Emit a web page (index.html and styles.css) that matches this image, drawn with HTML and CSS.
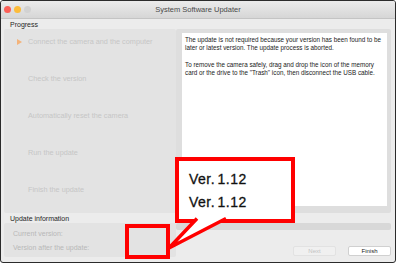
FILE: index.html
```html
<!DOCTYPE html>
<html>
<head>
<meta charset="utf-8">
<link rel="stylesheet" href="styles.css">
</head>
<body>
<div class="window">
  <div class="titlebar">
    <div class="lights">
      <span class="light red"></span>
      <span class="light yellow"></span>
      <span class="light gray"></span>
    </div>
    <div class="title">System Software Updater</div>
  </div>
  <div class="content">
    <div class="section-label">Progress</div>
    <div class="columns">
      <div class="col-left">
        <div class="steps">
          <div class="step active"><span class="arrow"></span>Connect the camera and the computer</div>
          <div class="step">Check the version</div>
          <div class="step">Automatically reset the camera</div>
          <div class="step">Run the update</div>
          <div class="step">Finish the update</div>
        </div>
        <div class="section-label info-label">Update information</div>
        <div class="info">
          <div>Current version:</div>
          <div>Version after the update:</div>
        </div>
      </div>
      <div class="col-right">
        <div class="msg-panel">
          <div class="msg">The update is not required because your version has been found to be<br>later or latest version. The update process is aborted.<br><br>To remove the camera safely, drag and drop the icon of the memory<br>card or the drive to the "Trash" icon, then disconnect the USB cable.</div>
        </div>
        <div class="bar"></div>
        <div class="buttons">
          <button class="btn disabled">Next</button>
          <button class="btn">Finish</button>
        </div>
      </div>
    </div>
  </div>
  <div class="mark"></div>
  <div class="callout">
    <div>Ver. 1.12</div>
    <div>Ver. 1.12</div>
  </div>
  <svg class="tail" width="70" height="40" viewBox="165 215 70 40">
    <polygon points="197,218 226,218 169,248" fill="#fff"/>
    <polyline points="197,218.5 169,248 226,218.5" fill="none" stroke="#f00" stroke-width="3.5" stroke-linejoin="miter"/>
  </svg>
</div>
</body>
</html>
```
FILE: styles.css
```css
* { box-sizing: border-box; }
html, body { margin: 0; padding: 0; }
body {
  width: 397px;
  height: 264px;
  background: #fff;
  font-family: "Liberation Sans", Arial, sans-serif;
  overflow: hidden;
}
.window {
  position: relative;
  width: 396px;
  height: 263px;
  border: 1px solid #2b2b2b;
  border-radius: 3px;
  background: #ececec;
  overflow: hidden;
}
.titlebar {
  position: relative;
  height: 18px;
  background: linear-gradient(#ebebeb, #d6d6d6);
  border-bottom: 1px solid #c4c4c4;
  display: flex;
  align-items: center;
  justify-content: center;
}
.lights {
  position: absolute;
  left: 3px;
  top: 5px;
  display: flex;
  gap: 3px;
}
.light {
  width: 7px;
  height: 7px;
  border-radius: 50%;
}
.light.red { background: #fb5f57; }
.light.yellow { background: #fcbc3a; }
.light.gray { background: #d2d2d2; }
.title {
  font-size: 7.5px;
  color: #4a4a4a;
}
.content {
  padding: 0 3px;
}
.section-label {
  font-size: 7px;
  color: #262626;
  padding-left: 6px;
  height: 9px;
  line-height: 9px;
  margin-top: 1px;
}
.columns {
  display: flex;
}
.col-left {
  width: 172px;
  display: flex;
  flex-direction: column;
}
.steps {
  height: 184px;
  background: #e3e3e3;
  border-radius: 2px;
  padding: 9px 0 0 24px;
  display: flex;
  flex-direction: column;
  gap: 29px;
}
.step {
  position: relative;
  font-size: 7.3px;
  color: #c6c6c6;
  height: 8px;
  line-height: 8px;
  white-space: nowrap;
}
.arrow {
  position: absolute;
  left: -11px;
  top: 1px;
  width: 0;
  height: 0;
  border-left: 5px solid #f4b37a;
  border-top: 3px solid transparent;
  border-bottom: 3px solid transparent;
}
.info-label {
  margin-top: 1px;
  height: 9px;
  line-height: 9px;
}
.info {
  height: 34px;
  background: #e3e3e3;
  border-radius: 2px;
  padding: 7px 0 0 9px;
  font-size: 7px;
  color: #b8b8b8;
  display: flex;
  flex-direction: column;
  gap: 6px;
  line-height: 8px;
}
.col-right {
  flex: 1;
  display: flex;
  flex-direction: column;
  padding-right: 1px;
}
.msg-panel {
  height: 184px;
  background: #dedede;
  padding: 4px 4px 7px 6px;
  border-radius: 2px;
}
.msg {
  height: 100%;
  background: #fff;
  padding: 3px 3px;
  font-size: 6.3px;
  line-height: 8.2px;
  color: #1a1a1a;
  white-space: nowrap;
}
.bar {
  margin-top: 10px;
  height: 7px;
  background: #d8d8d8;
  border-radius: 2px;
}
.buttons {
  margin-top: 16px;
  display: flex;
  justify-content: flex-end;
  gap: 12px;
}
.btn {
  width: 43px;
  height: 10px;
  padding: 0;
  border: 1px solid #d0d0d0;
  border-radius: 2px;
  background: #fff;
  font-family: "Liberation Sans", Arial, sans-serif;
  font-size: 6px;
  line-height: 8px;
  color: #222;
}
.btn.disabled {
  background: #f0f0f0;
  border-color: #e2e2e2;
  color: #c2c2c2;
}
.mark {
  position: absolute;
  left: 124px;
  top: 223px;
  width: 45px;
  height: 35px;
  border: 4px solid #f00;
}
.callout {
  position: absolute;
  left: 174px;
  top: 156px;
  width: 120px;
  height: 66px;
  border: 4px solid #f00;
  background: #fff;
  padding: 10px 0 0 10px;
  font-size: 14px;
  letter-spacing: 0.5px;
  word-spacing: -2px;
  color: #111;
  -webkit-text-stroke: 0.3px #111;
}
.callout div { height: 23px; line-height: 16px; }
.tail {
  position: absolute;
  left: 164px;
  top: 214px;
}
```
